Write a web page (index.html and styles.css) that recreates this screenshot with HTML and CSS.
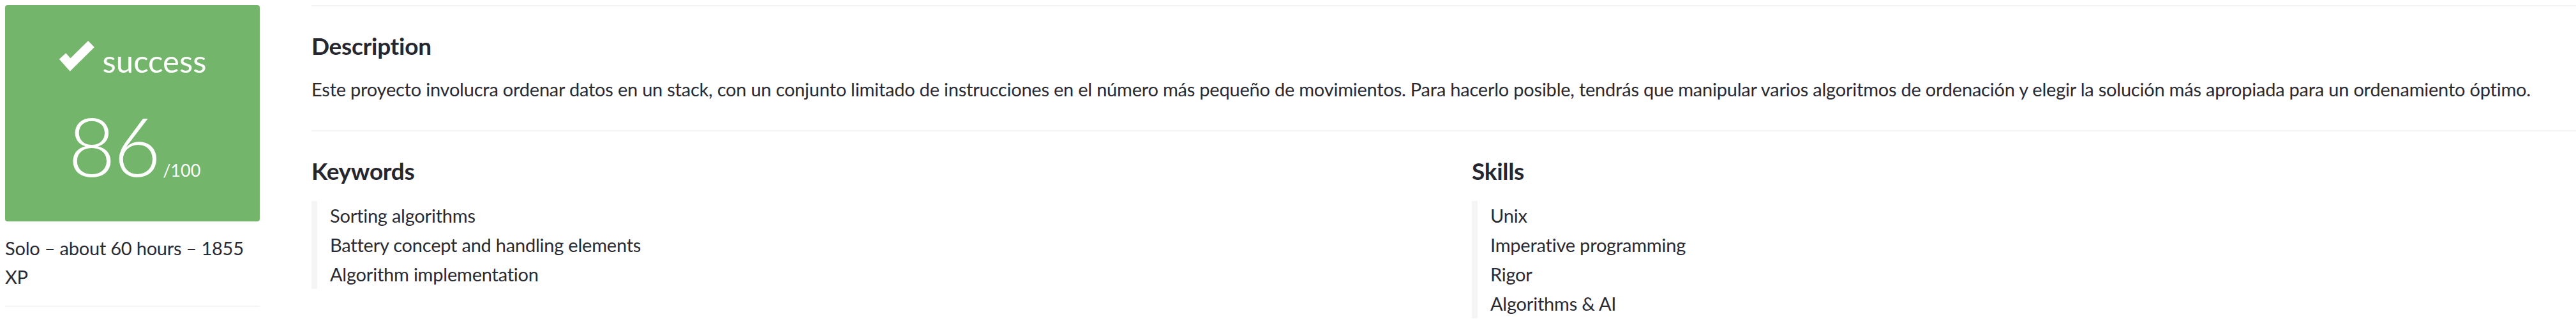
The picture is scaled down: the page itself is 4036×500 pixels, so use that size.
FILE: index.html
```html
<!DOCTYPE html>
<html lang="en">
<head>
<meta charset="utf-8">
<title>push_swap</title>
<link rel="stylesheet" href="styles.css">
</head>
<body>
<div class="page">
  <aside class="side">
    <div class="score-card">
      <div class="status">
        <svg class="check" width="57" height="49" viewBox="0 0 57 49" aria-hidden="true"><polyline points="6,25 18,38.5 51,6" fill="none" stroke="#fff" stroke-width="14" stroke-linejoin="miter" stroke-linecap="butt"/></svg>
        <span class="status-label">success</span>
      </div>
      <div class="score"><span class="mark">86</span><span class="max">/100</span></div>
    </div>
    <p class="meta">Solo – about 60 hours – 1855 XP</p>
    <div class="side-rule"></div>
  </aside>
  <main class="main">
    <section class="desc">
      <h3 class="title">Description</h3>
      <p class="desc-text">Este proyecto involucra ordenar datos en un stack, con un conjunto limitado de instrucciones en el número más pequeño de movimientos. Para hacerlo posible, tendrás que manipular varios algoritmos de ordenación y elegir la solución más apropiada para un ordenamiento óptimo.</p>
    </section>
    <div class="cols">
      <section class="col">
        <h3 class="title">Keywords</h3>
        <ul class="tags">
          <li>Sorting algorithms</li>
          <li>Battery concept and handling elements</li>
          <li>Algorithm implementation</li>
        </ul>
      </section>
      <section class="col">
        <h3 class="title">Skills</h3>
        <ul class="tags">
          <li>Unix</li>
          <li>Imperative programming</li>
          <li>Rigor</li>
          <li>Algorithms &amp; AI</li>
        </ul>
      </section>
    </div>
  </main>
</div>
</body>
</html>
```
FILE: styles.css
```css
html, body {
  margin: 0;
  padding: 0;
  background: #ffffff;
}

body {
  font-family: "Lato", "Open Sans", sans-serif;
  color: #2a2a32;
  font-size: 29px;
  line-height: 45px;
  letter-spacing: -0.22px;
}

.page {
  display: flex;
  align-items: flex-start;
  gap: 81px;
  padding: 8px 0 0 8px;
}

.side {
  flex: none;
  width: 399px;
}

.score-card {
  box-sizing: border-box;
  height: 339px;
  background: #73b66b;
  border-radius: 4px;
  color: #ffffff;
  display: flex;
  flex-direction: column;
  align-items: center;
  padding-top: 55px;
  letter-spacing: 0;
}

.status {
  display: flex;
  align-items: flex-start;
}

.check {
  display: block;
  flex: none;
}

.status-label {
  font-size: 49px;
  line-height: 49px;
  margin: 8px 0 0 12px;
}

.score {
  display: flex;
  align-items: baseline;
  margin-top: 44px;
  padding-left: 6px;
}

.mark {
  font-size: 128px;
  line-height: 128px;
  font-weight: 300;
  letter-spacing: -3px;
}

.max {
  font-size: 27px;
  line-height: 27px;
  font-weight: 400;
  margin-left: 6px;
}

.meta {
  margin: 19px 0 0;
}

.side-rule {
  height: 2px;
  background: #f4f4f4;
  margin-top: 23px;
}

.main {
  flex: 1;
  min-width: 0;
}

.desc {
  border-top: 2px solid #f4f4f4;
  border-bottom: 2px solid #f4f4f4;
  padding: 40px 0 42px;
}

.title {
  margin: 0;
  font-size: 37px;
  line-height: 44px;
  font-weight: 700;
  color: #26262e;
  letter-spacing: -0.3px;
}

.desc-text {
  margin: 23px 0 0;
}

.cols {
  display: grid;
  grid-template-columns: 1fr 1fr;
  column-gap: 88px;
  padding-top: 40px;
}

.tags {
  list-style: none;
  margin: 25px 0 0;
  padding: 0 0 0 20px;
  border-left: 9px solid #f5f5f5;
  line-height: 46px;
}
```
